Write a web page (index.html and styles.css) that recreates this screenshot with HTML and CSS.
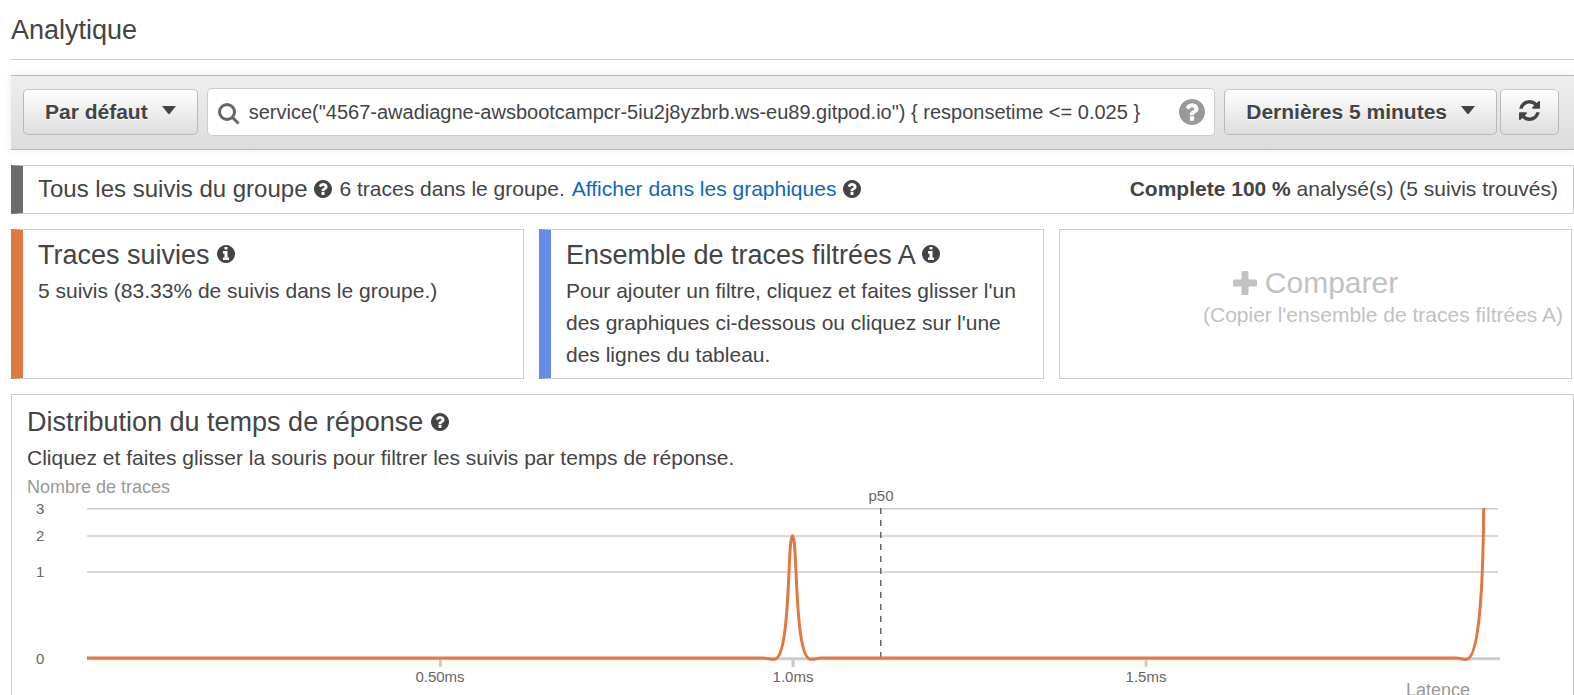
FILE: index.html
```html
<!DOCTYPE html>
<html lang="fr">
<head>
<meta charset="utf-8">
<title>Analytique</title>
<link rel="stylesheet" href="styles.css">
</head>
<body>
<svg class="sprite" aria-hidden="true">
  <symbol id="help" viewBox="128 128 1536 1536"><path d="M1024 1376v-192q0-14-9-23t-23-9h-192q-14 0-23 9t-9 23v192q0 14 9 23t23 9h192q14 0 23-9t9-23zm256-672q0-88-55.500-163t-138.500-116-170-41q-243 0-371 213-15 24 8 42l132 100q7 6 19 6 16 0 25-12 53-68 86-92 34-24 86-24 48 0 85.500 26t37.500 59q0 38-20 61t-68 45q-63 28-115.500 86.500t-52.500 125.500v36q0 14 9 23t23 9h192q14 0 23-9t9-23q0-19 21.500-49.500t54.500-49.500q32-18 49-28.500t46-35 44.500-48 28-60.500 12.500-81zm384 192q0 209-103 385.500t-279.500 279.500-385.500 103-385.500-103-279.500-279.500-103-385.500 103-385.500 279.500-279.500 385.500-103 385.500 103 279.500 279.500 103 385.500z"/></symbol>
  <symbol id="info" viewBox="128 128 1536 1536"><path d="M1152 1376v-160q0-14-9-23t-23-9h-96v-512q0-14-9-23t-23-9h-320q-14 0-23 9t-9 23v160q0 14 9 23t23 9h96v320h-96q-14 0-23 9t-9 23v160q0 14 9 23t23 9h448q14 0 23-9t9-23zm-128-896v-160q0-14-9-23t-23-9h-192q-14 0-23 9t-9 23v160q0 14 9 23t23 9h192q14 0 23-9t9-23zm640 416q0 209-103 385.500t-279.500 279.500-385.500 103-385.500-103-279.500-279.500-103-385.500 103-385.500 279.500-279.500 385.500-103 385.500 103 279.500 279.500 103 385.500z"/></symbol>
</svg>

<header class="page-head">
  <h1 class="heading">Analytique</h1>
</header>

<main class="content">
  <form class="toolbar">
    <button type="button" class="btn">Par défaut <svg class="caret" viewBox="0 0 14 8" aria-hidden="true"><path d="M0 0h14L8 7.500q-1 1-2 0z"/></svg></button>
    <div class="search">
      <svg class="search-icon" viewBox="0 0 24 24" aria-hidden="true"><circle cx="10" cy="10" r="7.500"/><path d="M15.500 15.500l6 6"/></svg>
      <input class="search-input" type="text" aria-label="Filtre" value='service("4567-awadiagne-awsbootcampcr-5iu2j8yzbrb.ws-eu89.gitpod.io") { responsetime &lt;= 0.025 }'>
      <svg class="search-help" aria-hidden="true"><use href="#help"/></svg>
    </div>
    <div class="btn-group">
      <button type="button" class="btn">Dernières 5 minutes <svg class="caret" viewBox="0 0 14 8" aria-hidden="true"><path d="M0 0h14L8 7.500q-1 1-2 0z"/></svg></button>
      <button type="button" class="btn btn-icon" aria-label="Actualiser"><svg class="refresh" viewBox="128 128 1536 1536" aria-hidden="true"><path d="M1639 1056q0 5-1 7-64 268-268 434.500t-478 166.500q-146 0-282.500-55t-243.500-157l-129 129q-19 19-45 19t-45-19-19-45v-448q0-26 19-45t45-19h448q26 0 45 19t19 45-19 45l-137 137q71 66 161 102t187 36q134 0 250-65t186-179q11-17 53-117 8-23 30-23h192q13 0 22.500 9.500t9.500 22.500zm25-800v448q0 26-19 45t-45 19h-448q-26 0-45-19t-19-45 19-45l138-138q-148-137-349-137-134 0-250 65t-186 179q-11 17-53 117-8 23-30 23h-199q-13 0-22.500-9.500t-9.500-22.500v-7q65-268 270-434.500t480-166.500q146 0 284 55.500t245 156.500l130-129q19-19 45-19t45 19 19 45z"/></svg></button>
    </div>
  </form>

  <section class="group">
    <h2 class="group-title">Tous les suivis du groupe</h2>
    <svg class="icon" aria-hidden="true"><use href="#help"/></svg>
    <span>6 traces dans le groupe.</span>
    <a class="link" href="#graphiques">Afficher dans les graphiques</a>
    <svg class="icon" aria-hidden="true"><use href="#help"/></svg>
    <p class="status"><strong>Complete 100 %</strong> analysé(s) (5 suivis trouvés)</p>
  </section>

  <div class="cards">
    <section class="card card-orange">
      <h2 class="heading">Traces suivies <svg class="icon" aria-hidden="true"><use href="#info"/></svg></h2>
      <p>5 suivis (83.33% de suivis dans le groupe.)</p>
    </section>
    <section class="card card-blue">
      <h2 class="heading">Ensemble de traces filtrées A <svg class="icon" aria-hidden="true"><use href="#info"/></svg></h2>
      <p>Pour ajouter un filtre, cliquez et faites glisser l'un des graphiques ci-dessous ou cliquez sur l'une des lignes du tableau.</p>
    </section>
    <button type="button" class="compare" disabled>
      <span class="compare-title"><svg class="plus" viewBox="0 0 24 24" aria-hidden="true"><path d="M10 0h4q1.500 0 1.500 1.500v7h7q1.500 0 1.500 1.500v4q0 1.500-1.500 1.500h-7v7q0 1.500-1.500 1.500h-4q-1.500 0-1.500-1.500v-7h-7q-1.500 0-1.500-1.500v-4q0-1.500 1.500-1.500h7v-7q0-1.500 1.500-1.500z"/></svg>Comparer</span>
      <span class="compare-note">(Copier l'ensemble de traces filtrées A)</span>
    </button>
  </div>

  <section class="panel" id="graphiques">
    <h2 class="heading">Distribution du temps de réponse <svg class="icon" aria-hidden="true"><use href="#help"/></svg></h2>
    <p>Cliquez et faites glisser la souris pour filtrer les suivis par temps de réponse.</p>
    <svg class="chart" viewBox="12 474 1561 240" role="img" aria-label="Nombre de traces par latence">
      <g class="axis-title"><text x="27" y="493">Nombre de traces</text><text x="1406" y="696">Latence</text></g>
      <g class="grid"><path d="M87 508.750H1498M87 536H1498M87 572H1498"/></g>
      <path class="axis" d="M87 658.800H1500"/>
      <path class="ticks" d="M440.500 659v8M793 659v8M1146 659v8"/>
      <path class="marker" d="M880.750 508V658"/>
      <path class="series" d="M87 658H763C768 658 770 659.500 774 659.300C784 659.500 787 620 789 572C790 548 791 535.500 792.500 535.500C794 535.500 795 548 796 572C798 620 801 659.500 811 659.300C815 659.500 817 658 821 658H1456C1461 658 1461 659.500 1466 659.500C1478 660 1483 600 1483.700 508"/>
      <g class="ylabels"><text x="36" y="514">3</text><text x="36" y="541">2</text><text x="36" y="577">1</text><text x="36" y="664">0</text></g>
      <g class="xlabels"><text x="440" y="682">0.50ms</text><text x="793" y="682">1.0ms</text><text x="1146" y="682">1.5ms</text><text x="881" y="501">p50</text></g>
    </svg>
  </section>
</main>
</body>
</html>
```
FILE: styles.css
```css
* { box-sizing: border-box; }
html { scrollbar-width: none; }
body {
  margin: 0;
  padding-left: 11px;
  background: #fff;
  color: #444;
  font: 21px/32px "Liberation Sans", Arial, sans-serif;
}
h1, h2, p { margin: 0; font-weight: 400; }
button, input { font: inherit; color: inherit; }
.sprite { display: none; }
.heading { font-size: 27px; line-height: 39px; }
.icon { width: 18px; height: 18px; fill: #444; flex: none; }
.heading .icon { vertical-align: 1px; }

.page-head { padding: 11px 0 9px; border-bottom: 1px solid #ccc; }
.content { display: flex; flex-direction: column; gap: 15px; padding-top: 15px; }

.toolbar {
  display: flex;
  align-items: center;
  gap: 9px;
  padding: 12px 15px 13px 12px;
  border: solid #b8b8b8;
  border-width: 1px 0;
  background: linear-gradient(#eee, #ddd);
  box-shadow: 0 0 8px rgba(0, 0, 0, .08);
}
.btn {
  display: flex;
  align-items: center;
  justify-content: center;
  gap: 14px;
  height: 46px;
  padding: 0 21px;
  border: 1px solid #b8b8b8;
  border-top-color: #ccc;
  border-radius: 5px;
  background: linear-gradient(#fff, #ddd);
  font-weight: 700;
  white-space: nowrap;
  text-shadow: 0 1px 1px #fff;
}
.btn-group { display: flex; gap: 3px; }
.btn-icon { width: 59px; padding: 0; }
.caret { width: 14px; height: 8px; margin-bottom: 4px; fill: #444; }
.refresh { width: 21px; height: 21px; margin-bottom: 4px; fill: #444; }
.search {
  display: flex;
  flex: 1;
  align-items: center;
  gap: 8px;
  height: 48px;
  padding: 0 9px;
  border: 1px solid #ccc;
  border-radius: 5px;
  background: #fff;
}
.search-icon { width: 24px; height: 24px; margin-top: 4px; fill: none; stroke: #666; stroke-width: 3; }
.search-input { flex: 1; min-width: 0; padding: 0; border: 0; outline: 0; background: none; font-size: 20px; }
.search-help { width: 26px; height: 26px; fill: #999; }

.group {
  display: flex;
  align-items: center;
  gap: 7px;
  padding: 7px 15px 8px;
  border: 1px solid #ccc;
  border-left: 12px solid #6b6b6b;
}
.group-title { font-size: 24px; }
.link { color: #1166bb; text-decoration: none; }
.status { margin-left: auto; }

.cards { display: grid; grid-template-columns: 513fr 505fr 513fr; gap: 15px; padding-right: 2px; }
.card { padding: 6px 15px 7px; border: 1px solid #ccc; }
.card-orange { border-left: 12px solid #e07941; }
.card-blue { border-left: 12px solid #688ae8; }
.compare {
  display: flex;
  flex-direction: column;
  justify-content: center;
  align-items: center;
  padding: 0 8px 10px;
  border: 1px solid #ccc;
  background: #fff;
  color: #c2c2c2;
}
.compare-title { display: flex; align-items: center; gap: 8px; font-size: 30px; }
.plus { width: 24px; height: 24px; fill: #c2c2c2; }
.compare-note { align-self: flex-end; }

.panel { border: 1px solid #ccc; border-bottom: 0; padding-top: 7px; }
.panel > .heading, .panel > p { padding: 0 15px; }
.panel > .heading { line-height: 40px; }
.panel .icon { vertical-align: 0; }
.chart { display: block; width: 100%; font-size: 15px; }
.axis-title { fill: #999; font-size: 18px; }
.grid { stroke: #ccc; stroke-width: 1.5; }
.axis, .ticks { stroke: #ccc; stroke-width: 3; }
.marker { stroke: #666; stroke-width: 1.5; stroke-dasharray: 6 6; }
.series { fill: none; stroke: #e07941; stroke-width: 3; }
.ylabels, .xlabels { fill: #666; }
.xlabels { text-anchor: middle; }
```
